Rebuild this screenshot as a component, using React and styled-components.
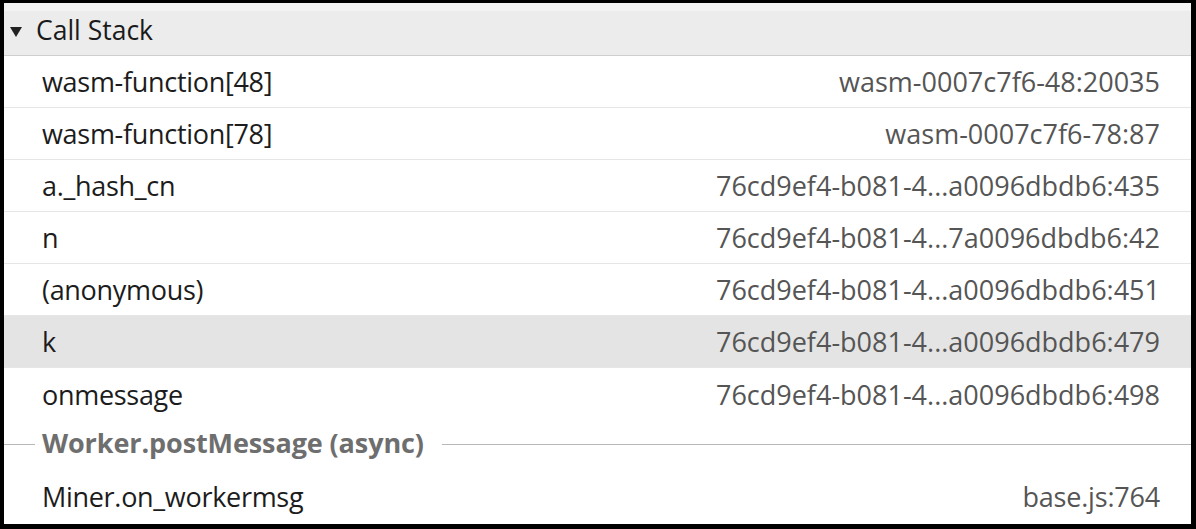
import React from "react";
import styled, { createGlobalStyle } from "styled-components";

const Global = createGlobalStyle`
  html, body { margin: 0; padding: 0; background: #000; }
  body { font-family: "Open Sans", "Noto Sans", Arial, sans-serif; }
`;

const Frame = styled.div`
  box-sizing: border-box;
  width: 1196px;
  height: 529px;
  border-style: solid;
  border-color: #000;
  border-width: 3px 5px 5px 4px;
  background: #fff;
  display: flex;
  flex-direction: column;
  overflow: hidden;
`;

const Header = styled.div`
  box-sizing: border-box;
  height: 53px;
  flex: none;
  display: flex;
  align-items: center;
  gap: 14px;
  padding: 0 0 6px 6px;
  background: #ececec;
  border-top: 8px solid #f3f3f3;
  border-bottom: 1px solid #cfcfcf;
  font-size: 26.5px;
  color: #1a1a1a;
`;

const Triangle = styled.span`
  width: 0;
  height: 0;
  border-left: 6px solid transparent;
  border-right: 6px solid transparent;
  border-top: 10px solid #222;
  margin-top: 3px;
`;

const Row = styled.div`
  box-sizing: border-box;
  height: ${(p) => p.$h || 52}px;
  flex: none;
  display: flex;
  align-items: center;
  justify-content: space-between;
  padding: 0 31px 0 38px;
  background: ${(p) => (p.$selected ? "#e4e4e4" : "#fff")};
  border-bottom: ${(p) => (p.$noLine ? "none" : "1px solid #e6e6e6")};
  font-size: 27px;
`;

const Name = styled.span`
  color: #1c1c1c;
  letter-spacing: -0.3px;
`;

const Location = styled.span`
  color: #555;
  letter-spacing: ${(p) => (p.$tight ? "-0.2px" : "0")};
`;

const AsyncRow = styled.div`
  height: 48px;
  flex: none;
  display: flex;
  align-items: center;
  &::before,
  &::after {
    content: "";
    height: 1px;
    background: #b8b8b8;
  }
  &::before {
    width: 31px;
  }
  &::after {
    flex: 1;
  }
`;

const AsyncLabel = styled.span`
  font-size: 27px;
  font-weight: 700;
  color: #6e6e6e;
  margin: 0 18px 3px 7px;
  letter-spacing: -0.1px;
`;

const frames = [
  ["wasm-function[48]", "wasm-0007c7f6-48:20035"],
  ["wasm-function[78]", "wasm-0007c7f6-78:87"],
  ["a._hash_cn", "76cd9ef4-b081-4...a0096dbdb6:435"],
  ["n", "76cd9ef4-b081-4...7a0096dbdb6:42"],
  ["(anonymous)", "76cd9ef4-b081-4...a0096dbdb6:451"],
  ["k", "76cd9ef4-b081-4...a0096dbdb6:479", true],
  ["onmessage", "76cd9ef4-b081-4...a0096dbdb6:498"],
];

export default function App() {
  return (
    <>
      <Global />
      <Frame>
        <Header>
          <Triangle />
          <span>Call Stack</span>
        </Header>
        {frames.map(([n, l, sel], i) => (
          <Row key={i} $selected={sel} $noLine={i === frames.length - 1}>
            <Name>{n}</Name>
            <Location>{l}</Location>
          </Row>
        ))}
        <AsyncRow>
          <AsyncLabel>Worker.postMessage (async)</AsyncLabel>
        </AsyncRow>
        <Row $h={56} $noLine>
          <Name>Miner.on_workermsg</Name>
          <Location $tight>base.js:764</Location>
        </Row>
      </Frame>
    </>
  );
}
